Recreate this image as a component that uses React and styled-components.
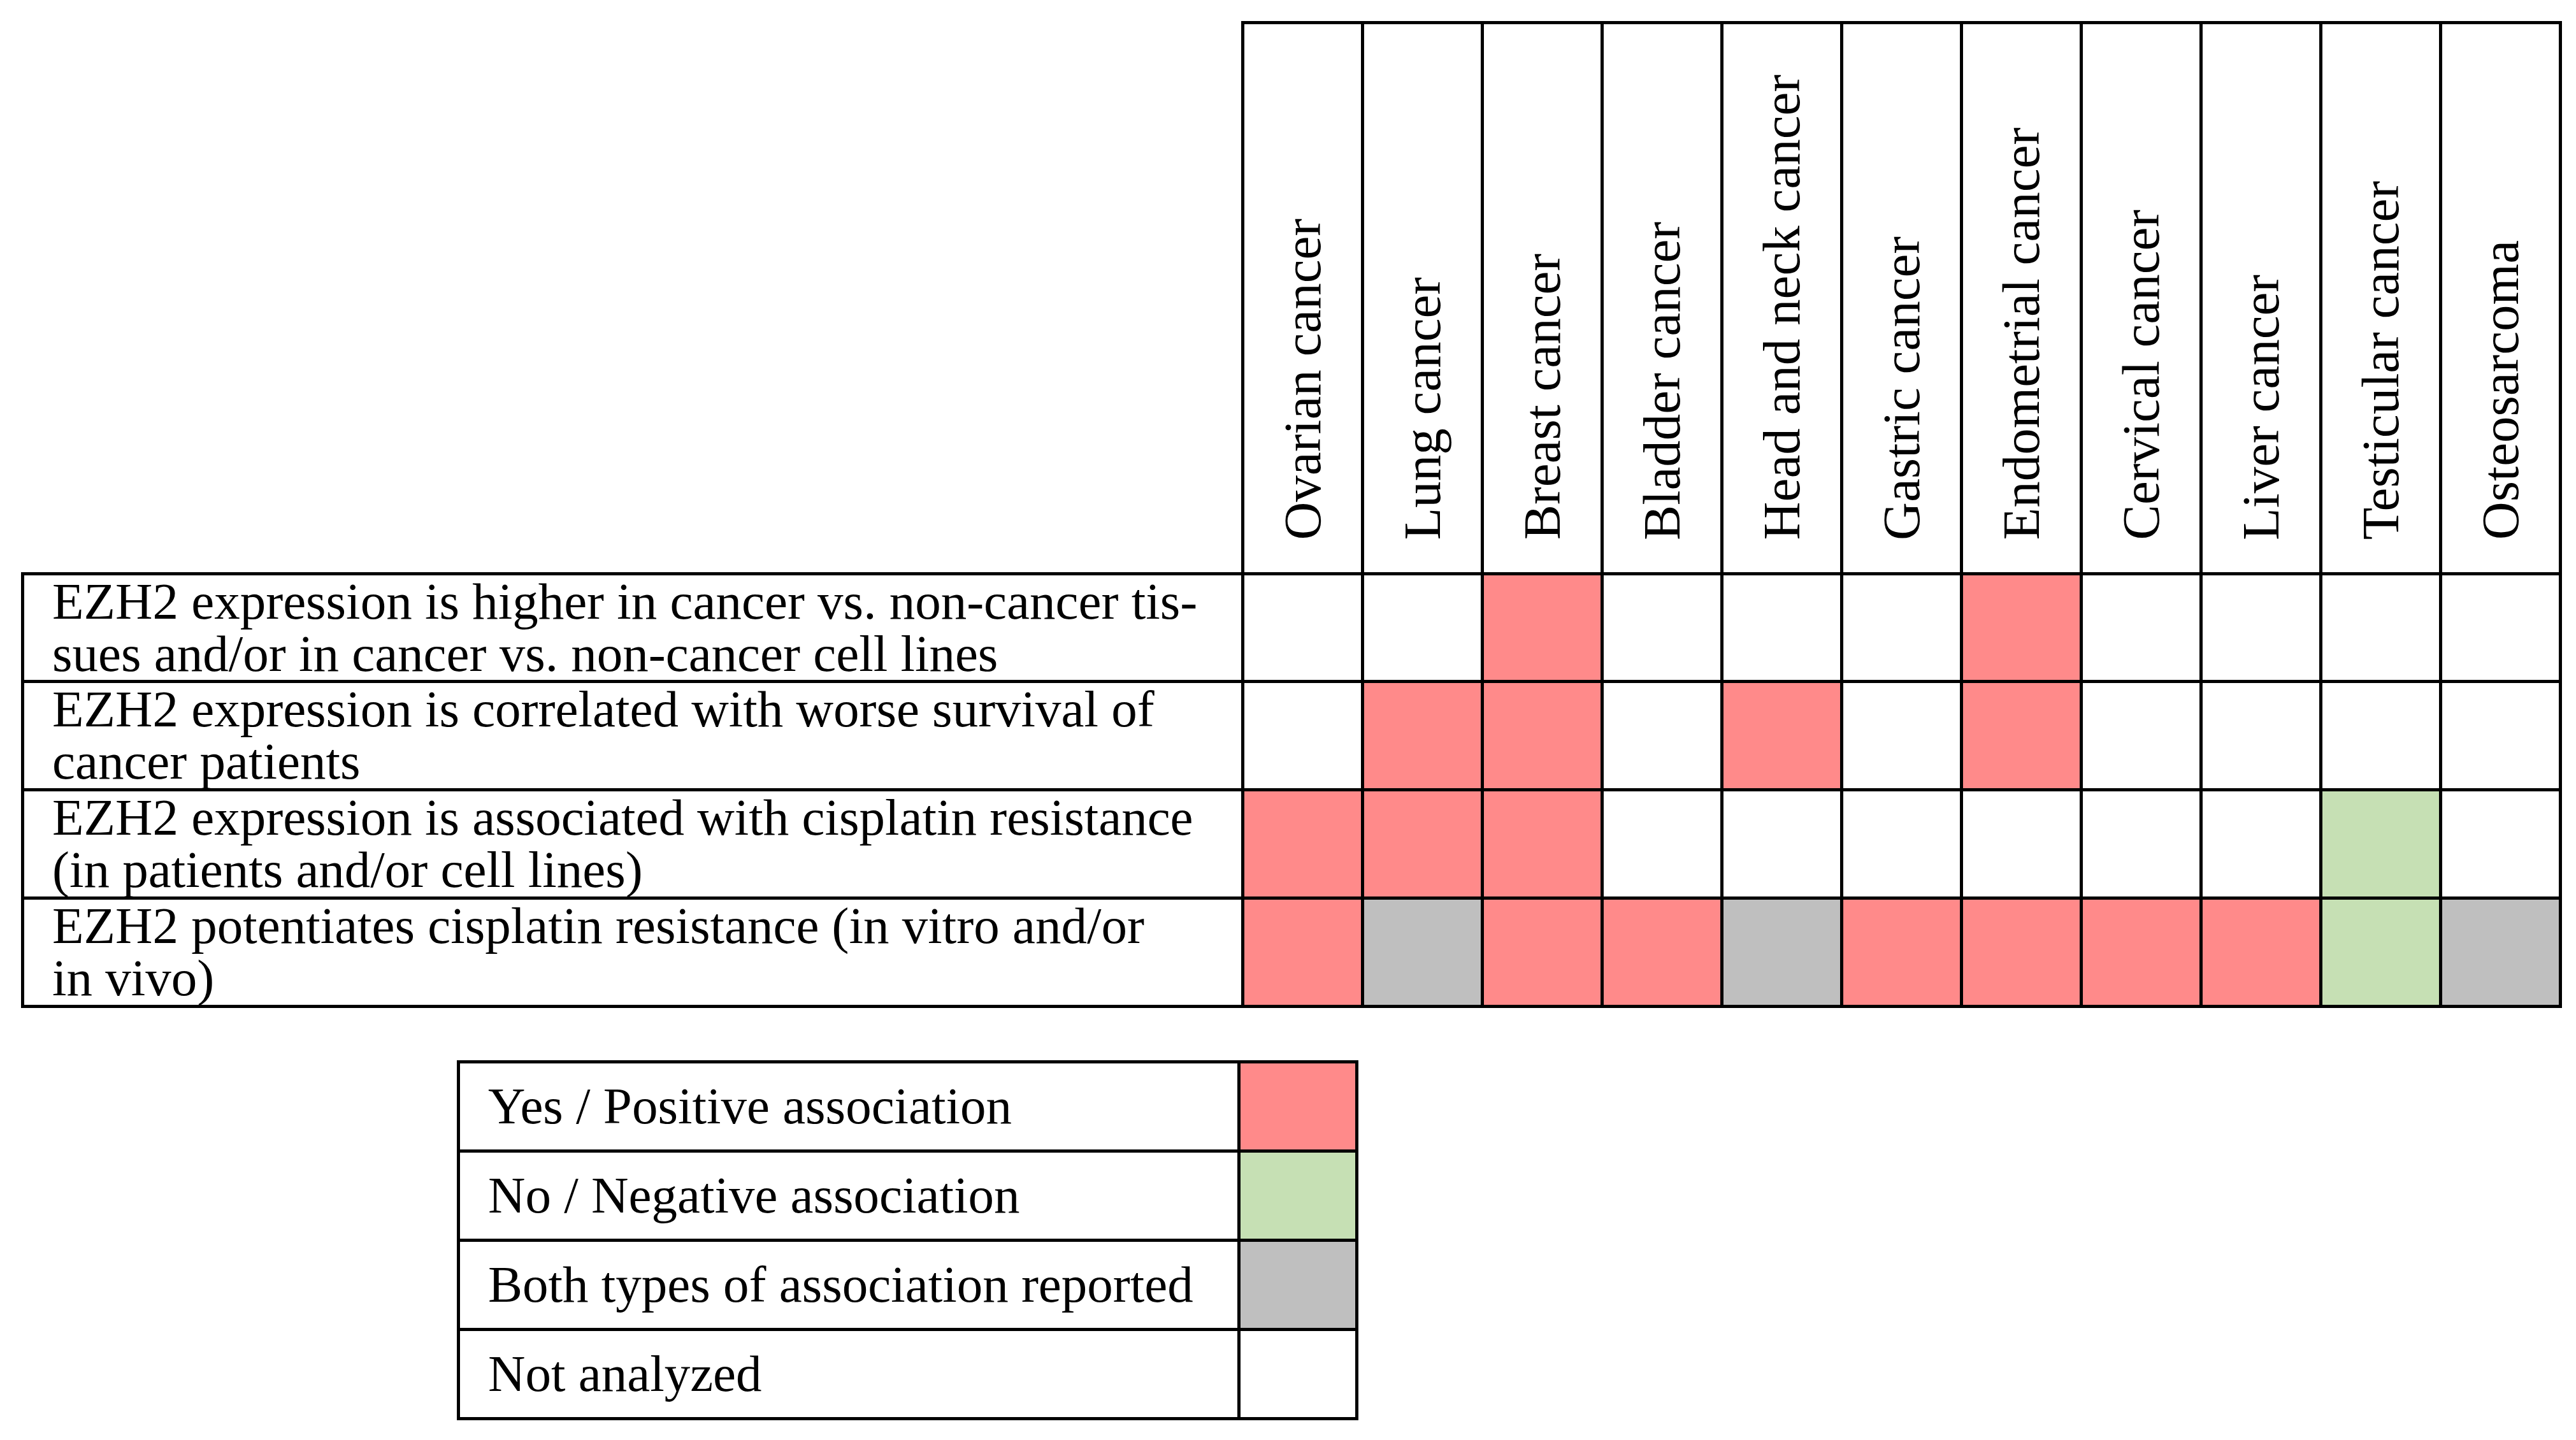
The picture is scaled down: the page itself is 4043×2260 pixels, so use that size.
import React from 'react'
import styled, { createGlobalStyle } from 'styled-components'

const GlobalStyle = createGlobalStyle`
  html, body {
    margin: 0;
    padding: 0;
    background: #ffffff;
  }
  body {
    font-family: "Liberation Serif", "DejaVu Serif", serif;
    color: #000;
  }
`

const colors = {
  red: '#ff8a8a',
  green: '#c6e0b4',
  gray: '#bfbfbf',
  none: '#ffffff',
}

const Page = styled.main`
  width: 4043px;
  height: 2260px;
  padding: 33px 0 0 33px;
  box-sizing: border-box;
  display: flex;
  flex-direction: column;
  align-items: flex-start;
`

const Grid = styled.table`
  border-collapse: collapse;
  table-layout: fixed;
  font-size: 81px;
`

const Corner = styled.th`
  width: 1912px;
  height: 862px;
  padding: 0;
  border: none;
`

const HeadCell = styled.th`
  width: 183px;
  border: 5px solid #000;
  padding: 0 0 30px 0;
  vertical-align: bottom;
  font-weight: normal;
  font-size: 83px;
`

const Rotated = styled.span`
  display: inline-block;
  writing-mode: vertical-rl;
  transform: rotate(180deg);
  white-space: nowrap;
  line-height: 1;
`

const LabelCell = styled.td`
  border: 5px solid #000;
  height: ${(p) => p.$h}px;
  padding: 0 0 0 44px;
  vertical-align: middle;
  line-height: 82px;
  white-space: nowrap;
`

const Swatch = styled.td`
  border: 5px solid #000;
  padding: 0;
  background: ${(p) => colors[p.$c]};
`

const Legend = styled.table`
  border-collapse: collapse;
  table-layout: fixed;
  font-size: 81px;
  margin: 82px 0 0 684px;
`

const LegendLabel = styled.td`
  width: 1225px;
  height: 140px;
  border: 5px solid #000;
  padding: 0 0 0 44px;
  box-sizing: border-box;
  white-space: nowrap;
`

const LegendSwatch = styled.td`
  width: 180px;
  border: 5px solid #000;
  padding: 0;
  background: ${(p) => colors[p.$c]};
`

const cancers = [
  'Ovarian cancer',
  'Lung cancer',
  'Breast cancer',
  'Bladder cancer',
  'Head and neck cancer',
  'Gastric cancer',
  'Endometrial cancer',
  'Cervical cancer',
  'Liver cancer',
  'Testicular cancer',
  'Osteosarcoma',
]

// r = positive, g = negative, x = both, . = not analyzed
const rows = [
  {
    lines: ['EZH2 expression is higher in cancer vs. non-cancer tis-', 'sues and/or in cancer vs. non-cancer cell lines'],
    cells: '..r...r....',
    h: 164,
  },
  {
    lines: ['EZH2 expression is correlated with worse survival of', 'cancer patients'],
    cells: '.rr.r.r....',
    h: 165,
  },
  {
    lines: ['EZH2 expression is associated with cisplatin resistance', '(in patients and/or cell lines)'],
    cells: 'rrr......g.',
    h: 165,
  },
  {
    lines: ['EZH2 potentiates cisplatin resistance (in vitro and/or', 'in vivo)'],
    cells: 'rxrrxrrrrgx',
    h: 165,
  },
]

const code = { r: 'red', g: 'green', x: 'gray', '.': 'none' }

const legend = [
  { text: 'Yes / Positive association', c: 'red' },
  { text: 'No / Negative association', c: 'green' },
  { text: 'Both types of association reported', c: 'gray' },
  { text: 'Not analyzed', c: 'none' },
]

export default function App() {
  return (
    <>
      <GlobalStyle />
      <Page>
        <Grid>
          <thead>
            <tr>
              <Corner />
              {cancers.map((c) => (
                <HeadCell key={c}>
                  <Rotated>{c}</Rotated>
                </HeadCell>
              ))}
            </tr>
          </thead>
          <tbody>
            {rows.map((row, i) => (
              <tr key={i}>
                <LabelCell $h={row.h}>
                  {row.lines[0]}
                  <br />
                  {row.lines[1]}
                </LabelCell>
                {row.cells.split('').map((ch, j) => (
                  <Swatch key={j} $c={code[ch]} />
                ))}
              </tr>
            ))}
          </tbody>
        </Grid>
        <Legend>
          <tbody>
            {legend.map((l) => (
              <tr key={l.text}>
                <LegendLabel>{l.text}</LegendLabel>
                <LegendSwatch $c={l.c} />
              </tr>
            ))}
          </tbody>
        </Legend>
      </Page>
    </>
  )
}
